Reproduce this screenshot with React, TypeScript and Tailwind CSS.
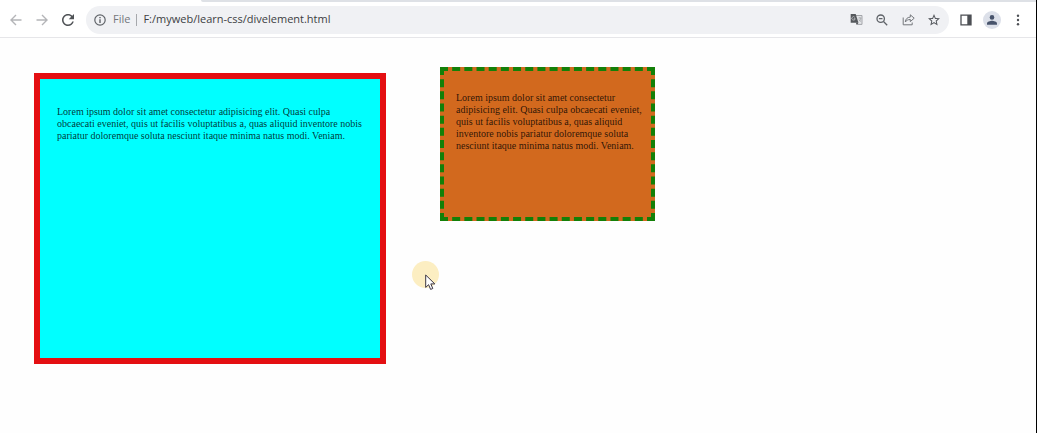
import React from "react";

const LOREM =
  "Lorem ipsum dolor sit amet consectetur adipisicing elit. Quasi culpa obcaecati eveniet, quis ut facilis voluptatibus a, quas aliquid inventore nobis pariatur doloremque soluta nesciunt itaque minima natus modi. Veniam.";

function IconButton({
  label,
  className = "",
  children,
}: {
  label: string;
  className?: string;
  children: React.ReactNode;
}) {
  return (
    <button
      type="button"
      aria-label={label}
      className={`flex size-[18px] shrink-0 items-center justify-center rounded-full ${className}`}
    >
      {children}
    </button>
  );
}

function ArrowIcon({ flip = false }: { flip?: boolean }) {
  return (
    <svg viewBox="0 0 12 12" className={flip ? "size-3 rotate-180" : "size-3"} fill="none" stroke="#b4b5b8" strokeWidth="1.4">
      <path d="M11.5 6H1.2M6 1L1 6l5 5" />
    </svg>
  );
}

function ReloadIcon() {
  return (
    <svg viewBox="4 4 16 16" className="size-3" fill="#4f5256">
      <path d="M17.65 6.35C16.2 4.9 14.21 4 12 4c-4.42 0-7.99 3.58-7.99 8s3.57 8 7.99 8c3.73 0 6.84-2.55 7.73-6h-2.08c-.82 2.33-3.04 4-5.65 4-3.31 0-6-2.69-6-6s2.69-6 6-6c1.66 0 3.14.69 4.22 1.78L13 11h7V4l-2.35 2.35z" />
    </svg>
  );
}

function InfoIcon() {
  return (
    <svg viewBox="0 0 12 12" className="size-3" fill="none" stroke="#5f6368" strokeWidth="1.2">
      <circle cx="6" cy="6" r="5.2" />
      <path d="M6 5.3V9M6 3v1.3" strokeWidth="1.4" />
    </svg>
  );
}

function TranslateIcon() {
  return (
    <svg viewBox="0 0 13 13" className="size-[13px]" fill="none">
      <path d="M6 2.5h6v8.9H7.2" stroke="#a3a5a9" strokeWidth="1" fill="#e3e4e7" />
      <path d="M8.500 5h2.800M9.900 4.200v.8M10.900 5c-.2 1.500-1 2.500-1.900 3.300M9 6.500c.4.900 1 1.500 2 2" stroke="#9a9da1" strokeWidth=".7" />
      <path d="M.7 1h5l2.700 8.800H.7z" fill="#55585c" />
      <path d="M6 9.800h2.400L6.800 12z" fill="#3f4246" />
      <path d="M4.800 4.300A1.700 1.700 0 1 0 5.200 5.700H3.700" stroke="#c5c7ca" strokeWidth=".8" />
    </svg>
  );
}

function ZoomOutIcon() {
  return (
    <svg viewBox="0 0 12 12" className="size-3" fill="none" stroke="#5f6368" strokeWidth="1.3">
      <circle cx="4.700" cy="4.700" r="3.700" />
      <path d="M7.500 7.500l3.700 3.700M2.900 4.700h3.600" />
    </svg>
  );
}

function ShareIcon() {
  return (
    <svg viewBox="0 0 13 13" className="size-[13px]" fill="none" stroke="#74777b" strokeWidth="1">
      <path d="M1.200 4.500v7.300h9V9.500" />
      <path d="M3.300 9c.3-3 1.900-4.700 5-4.900V1.800L12.200 5.200 8.300 8.600V6.500C6 6.500 4.500 7.300 3.300 9z" strokeLinejoin="round" />
    </svg>
  );
}

function StarIcon() {
  return (
    <svg viewBox="2 2 20 20" className="size-3" fill="#55585d">
      <path d="M22 9.240l-7.190-.62L12 2 9.190 8.630 2 9.240l5.460 4.730L5.820 21 12 17.270 18.180 21l-1.630-7.030L22 9.240zM12 15.400l-3.760 2.270 1-4.280-3.320-2.880 4.380-.38L12 6.100l1.710 4.040 4.380.38-3.320 2.880 1 4.280L12 15.400z" />
    </svg>
  );
}

function PanelIcon() {
  return (
    <svg viewBox="0 0 12 12" className="size-3" fill="none">
      <path d="M1 1.200h10v9.600H1z" stroke="#4c4f54" strokeWidth="1.300" />
      <path d="M7.300 1H11v10H7.300z" fill="#4c4f54" />
    </svg>
  );
}

function PersonIcon() {
  return (
    <svg viewBox="0 0 10 10" className="size-[10px]" fill="#47536b">
      <circle cx="5" cy="2.400" r="2.300" />
      <path d="M0 9.800V8.400C0 6.600 3.300 5.700 5 5.700s5 .9 5 2.700v1.400z" />
    </svg>
  );
}

function MenuIcon() {
  return (
    <svg viewBox="0 0 4 12" className="h-3 w-1" fill="#4c4f54">
      <circle cx="2" cy="1.700" r="1.200" />
      <circle cx="2" cy="6" r="1.200" />
      <circle cx="2" cy="10.300" r="1.200" />
    </svg>
  );
}

function Toolbar() {
  return (
    <header className="border-b border-[#e6e6e9] bg-white">
      <div className="flex h-[2px]">
        <div className="w-[201px] bg-white" />
        <div className="flex-1 rounded-bl bg-[#dee1e6]" />
      </div>
      <div className="flex h-[35px] items-center pr-[9px] pl-[7px]">
        <nav className="flex gap-2">
          <IconButton label="Back"><ArrowIcon /></IconButton>
          <IconButton label="Forward"><ArrowIcon flip /></IconButton>
          <IconButton label="Reload"><ReloadIcon /></IconButton>
        </nav>
        <div className="ml-[9px] flex h-7 flex-1 items-center rounded-full bg-[#f0f1f4] pr-[6px] pl-[5px]">
          <IconButton label="Site information"><InfoIcon /></IconButton>
          <label htmlFor="address" className="ml-1 font-['Open_Sans',sans-serif] text-[11px] text-[#74777b]">
            File
          </label>
          <span className="mx-[6px] h-3 w-px bg-[#a6a8ac]" />
          <input
            id="address"
            type="text"
            defaultValue="F:/myweb/learn-css/divelement.html"
            className="min-w-0 flex-1 bg-transparent font-['Open_Sans',sans-serif] text-[11px] text-[#3c3e42] outline-none"
          />
          <div className="flex gap-2">
            <IconButton label="Translate"><TranslateIcon /></IconButton>
            <IconButton label="Zoom out"><ZoomOutIcon /></IconButton>
            <IconButton label="Share"><ShareIcon /></IconButton>
            <IconButton label="Bookmark"><StarIcon /></IconButton>
          </div>
        </div>
        <div className="ml-2 flex gap-2">
          <IconButton label="Side panel"><PanelIcon /></IconButton>
          <IconButton label="Profile" className="bg-[#dce0e9]"><PersonIcon /></IconButton>
          <IconButton label="Menu"><MenuIcon /></IconButton>
        </div>
      </div>
    </header>
  );
}

function Pointer() {
  return (
    <div aria-hidden="true" className="pointer-events-none absolute top-[261px] left-[412px]">
      <div className="size-[27px] rounded-full bg-[#fceec2]" />
      <svg viewBox="0 0 11 17" className="absolute top-[13px] left-[13px] h-[17px] w-[11px]" fill="#fff" stroke="#3b3542" strokeWidth="1">
        <path d="M.7 1v12.400l2.900-2.700 2 4.700 2.200-.9-2-4.600h4z" />
      </svg>
    </div>
  );
}

export default function App() {
  return (
    <div className="relative min-h-screen border-r border-black bg-[#fefefe]">
      <Toolbar />
      <main className="flex items-start gap-[54px] px-[34px] pt-[29px] pb-8 font-['Liberation_Serif',serif] text-[10px] leading-[12px] text-black/80">
        <div className="mt-[6px] min-h-[291px] w-[352px] border-6 border-[#e40f12] bg-[#00ffff] px-[17px] py-[27px]">
          <p>{LOREM}</p>
        </div>
        <div className="min-h-[154px] w-[215px] border-4 border-dashed border-[#138008] bg-[#d2691e] py-[21px] pr-1 pl-3">
          <p>{LOREM}</p>
        </div>
      </main>
      <Pointer />
    </div>
  );
}
